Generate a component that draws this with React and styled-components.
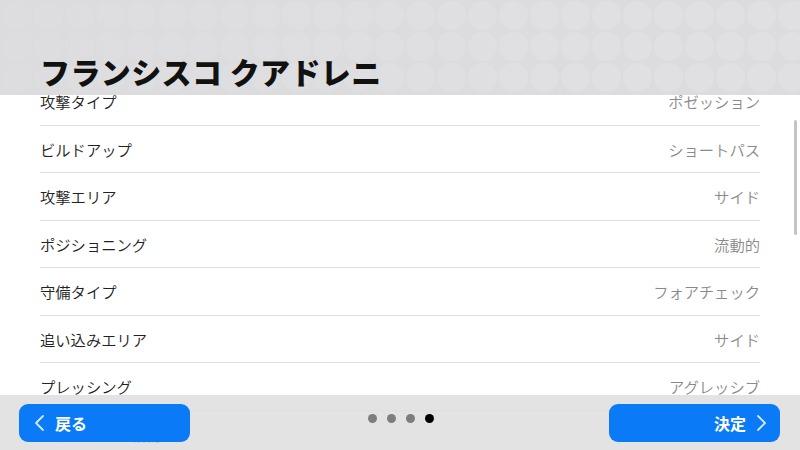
import styled, { createGlobalStyle } from "styled-components";

const GlobalStyle = createGlobalStyle`
  html, body {
    margin: 0;
    padding: 0;
    background: #ffffff;
  }
  body {
    font-family: "Noto Sans CJK JP", "Noto Sans", sans-serif;
  }
`;

const Screen = styled.div`
  width: 800px;
  height: 450px;
  display: grid;
  grid-template-rows: 95px 1fr;
  overflow: hidden;
`;

const Header = styled.header`
  background-color: #dcdcde;
  background-image: radial-gradient(circle at center, rgba(255, 255, 255, 0.11) 0 14px, transparent 15px);
  background-size: 31px 31px;
  background-position: 2px 0;
  display: flex;
  align-items: flex-end;
  padding: 0 0 9px 40px;
  box-sizing: border-box;
  position: relative;
  &::before {
    content: "";
    position: absolute;
    inset: 0;
    background: linear-gradient(90deg, rgba(220, 220, 222, 0.7) 0%, rgba(220, 220, 222, 0.3) 45%, rgba(220, 220, 222, 0) 75%);
  }
`;

const Title = styled.h1`
  position: relative;
  margin: 0;
  font-size: 30px;
  font-weight: 900;
  color: #111111;
  letter-spacing: 0.4px;
  line-height: 1;
`;

const Body = styled.main`
  position: relative;
  overflow: hidden;
  background: #ffffff;
`;

const List = styled.ul`
  list-style: none;
  margin: -17px 0 0 0;
  padding: 0 40px;
`;

const Row = styled.li`
  height: 47.5px;
  display: flex;
  align-items: center;
  justify-content: space-between;
  border-bottom: 1.5px solid #dedede;
  box-sizing: border-box;
  font-size: 15.3px;
  font-weight: 350;
`;

const Label = styled.span`
  color: #222222;
`;

const Value = styled.span`
  color: #8a8a8a;
`;

const ScrollBar = styled.div`
  position: absolute;
  right: 3px;
  top: 25px;
  width: 3px;
  height: 115px;
  border-radius: 2px;
  background: #c4c4c4;
`;

const Footer = styled.footer`
  position: absolute;
  left: 0;
  right: 0;
  bottom: 0;
  height: 55px;
  background: rgba(222, 222, 224, 0.86);
  display: flex;
  align-items: flex-start;
  justify-content: space-between;
  padding: 9px 20px 0 19px;
  box-sizing: border-box;
`;

const NavButton = styled.button`
  width: 171px;
  height: 38px;
  border: none;
  border-radius: 9px;
  background: #0b7af6;
  color: #ffffff;
  font-family: inherit;
  font-size: 16px;
  font-weight: 700;
  display: flex;
  align-items: center;
  justify-content: ${(p) => (p.$next ? "flex-end" : "flex-start")};
  gap: 10px;
  padding: ${(p) => (p.$next ? "0 12px 0 0" : "0 0 0 14px")};
  box-sizing: border-box;
`;

const Dots = styled.div`
  display: flex;
  gap: 10px;
  margin-top: 10px;
  margin-left: 2px;
`;

const Dot = styled.span`
  width: 9px;
  height: 9px;
  border-radius: 50%;
  background: ${(p) => (p.$active ? "#000000" : "#7d7d7f")};
`;

const Chevron = ({ dir }) => (
  <svg width="12" height="18" viewBox="0 0 12 18" fill="none">
    <path
      d={dir === "left" ? "M10 2 L3 9 L10 16" : "M2 2 L9 9 L2 16"}
      stroke="#d6e8ff"
      strokeWidth="1.8"
      strokeLinecap="round"
      strokeLinejoin="round"
    />
  </svg>
);

const rows = [
  ["攻撃タイプ", "ポゼッション"],
  ["ビルドアップ", "ショートパス"],
  ["攻撃エリア", "サイド"],
  ["ポジショニング", "流動的"],
  ["守備タイプ", "フォアチェック"],
  ["追い込みエリア", "サイド"],
  ["プレッシング", "アグレッシブ"],
  ["ディフェンス戦術", ""],
];

export default function App() {
  return (
    <>
      <GlobalStyle />
      <Screen>
        <Header>
          <Title>フランシスコ クアドレニ</Title>
        </Header>
        <Body>
          <List>
            {rows.map(([label, value]) => (
              <Row key={label}>
                <Label>{label}</Label>
                <Value>{value}</Value>
              </Row>
            ))}
          </List>
          <ScrollBar />
          <Footer>
            <NavButton>
              <Chevron dir="left" />
              戻る
            </NavButton>
            <Dots>
              <Dot />
              <Dot />
              <Dot />
              <Dot $active />
            </Dots>
            <NavButton $next>
              決定
              <Chevron dir="right" />
            </NavButton>
          </Footer>
        </Body>
      </Screen>
    </>
  );
}
